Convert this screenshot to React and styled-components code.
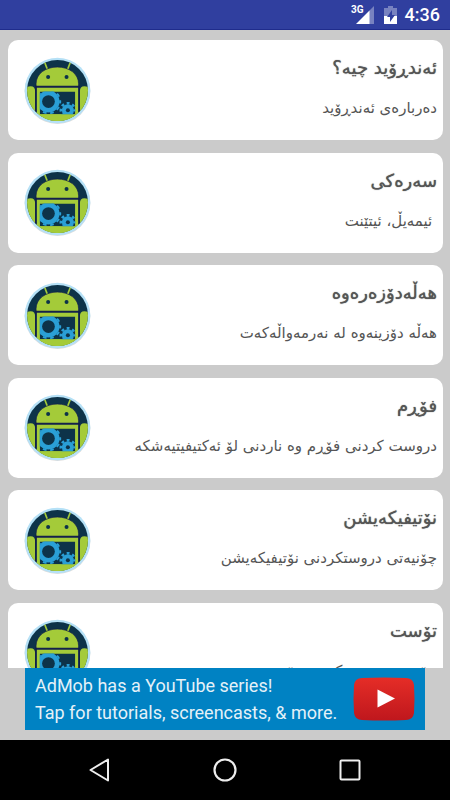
import React from 'react';
import styled, { createGlobalStyle } from 'styled-components';

const GlobalStyle = createGlobalStyle`
  * {
    box-sizing: border-box;
  }

  body {
    margin: 0;
    background-color: #cbcbcb;
    font-family: Roboto, 'DejaVu Sans', sans-serif;
  }
`;

const Screen = styled.div`
  display: flex;
  flex-direction: column;
  height: 100vh;
  background-color: #cbcbcb;
`;

const StatusBar = styled.header`
  display: flex;
  flex: none;
  align-items: center;
  justify-content: flex-end;
  height: 30px;
  padding-right: 10px;
  background-color: #303f9f;
  border-bottom: 1px solid #1f2c8c;
  color: white;
`;

const Network = styled.span`
  align-self: flex-start;
  margin-top: 4px;
  margin-right: -8px;
  font-size: 10px;
  font-weight: 700;
  line-height: 12px;
`;

const Clock = styled.time`
  margin-left: 8px;
  font-size: 18px;
  font-weight: 500;
  line-height: 30px;
`;

const Scroller = styled.main`
  flex: 1;
  min-height: 0;
  overflow: hidden;
  padding: 10px 7px 0 8px;
`;

const LessonList = styled.ul`
  display: flex;
  flex-direction: column;
  justify-content: space-between;
  min-height: 663px;
  margin: 0;
  padding: 0;
  list-style: none;
`;

const Card = styled.li`
  display: flex;
  align-items: center;
  height: 100px;
  padding: 0 6px 0 16px;
  border-radius: 10px;
  background-color: white;
`;

const CardText = styled.div`
  flex: 1;
  min-width: 0;
  padding-bottom: 4px;
  text-align: right;
  font-family: 'DejaVu Sans', sans-serif;
  white-space: nowrap;
`;

const CardTitle = styled.h2`
  margin: 0;
  color: #555;
  font-size: 18px;
  font-weight: 400;
  line-height: 40px;
  text-shadow: 0 0 1px #555;
`;

const CardSubtitle = styled.p`
  margin: 0;
  color: #555;
  font-size: 15px;
  line-height: 40px;
  white-space: pre;
`;

const AdSlot = styled.aside`
  display: flex;
  flex: none;
  justify-content: center;
  padding: 0 25px 10px;
`;

const AdBanner = styled.a`
  display: flex;
  align-items: center;
  justify-content: space-between;
  width: 100%;
  max-width: 400px;
  height: 62px;
  padding: 0 10px;
  background-color: #0082c3;
  color: #e4f1f8;
  font-size: 18px;
  line-height: 27px;
  text-decoration: none;
  white-space: nowrap;
`;

const NavBar = styled.nav`
  display: flex;
  flex: none;
  height: 60px;
  padding: 0 38px;
  background-color: black;
`;

const NavButton = styled.button`
  display: flex;
  flex: 1;
  align-items: center;
  justify-content: center;
  padding: 0;
  border: 0;
  background: none;
  color: #eee;
`;

const lessons = [
  { id: 'android', title: 'ئەندڕۆید چیە؟', subtitle: 'دەربارەی ئەندڕۆید' },
  { id: 'main', title: 'سەرەکی', subtitle: ' ئیمەیڵ، ئیتێنت' },
  { id: 'debug', title: 'هەڵەدۆزەرەوە', subtitle: 'هەڵە دۆزینەوە لە نەرمەواڵەکەت' },
  { id: 'form', title: 'فۆڕم', subtitle: 'دروست کردنی فۆڕم وە ناردنی لۆ ئەکتیفیتیەشکە' },
  { id: 'notification', title: 'نۆتیفیکەیشن', subtitle: 'چۆنیەتی دروستکردنی نۆتیفیکەیشن' },
  { id: 'toast', title: 'تۆست', subtitle: 'چۆنیەتی دروستکردنی تۆست' },
];

// the teeth are a dashed ring around the solid part
function Gear({ cx, cy, r, tooth, teeth, hole }) {
  const ring = r + tooth / 2;
  const dash = (Math.PI * ring) / teeth;
  return (
    <g>
      <circle cx={cx} cy={cy} r={r + 1} fill="#2a9fd6" />
      <circle
        cx={cx}
        cy={cy}
        r={ring}
        fill="none"
        stroke="#2a9fd6"
        strokeWidth={tooth}
        strokeDasharray={`${dash} ${dash}`}
        strokeDashoffset={dash / 2}
      />
      <circle cx={cx} cy={cy} r={hole} fill="#0d3349" />
    </g>
  );
}

function AndroidBadge({ name }) {
  const clip = `badge-${name}`;
  return (
    <svg width="67" height="67" viewBox="0 0 200 200" aria-hidden="true">
      <clipPath id={clip}>
        <circle cx="100" cy="100" r="91" />
      </clipPath>
      <circle cx="100" cy="102" r="98" fill="#dcdcdc" />
      <circle cx="100" cy="100" r="98" fill="#b5e1f7" />
      <g clipPath={`url(#${clip})`}>
        <rect width="200" height="200" fill="#0d3349" />
        <path d="M61 14l10 26M139 14l-10 26" stroke="#a4cb39" strokeWidth="5" />
        <path
          d="M36 87V80C36 50 64 30 99.500 30S163 50 163 80V87z"
          fill="#a4cb39"
          stroke="#10194d"
          strokeWidth="2"
        />
        <circle cx="72" cy="60" r="6" fill="#0d3349" />
        <circle cx="127" cy="60" r="6" fill="#0d3349" />
        <rect y="165" width="200" height="35" fill="#a4cb39" />
        <rect x="38" y="91" width="124" height="109" fill="#a4cb39" />
        <path d="M0 200V97Q8 87 20 87Q33 87 33 101V200z" fill="#a4cb39" />
        <path d="M200 200V97Q192 87 180 87Q167 87 167 101V200z" fill="#a4cb39" />
        <path d="M35.500 86V166M164.500 86V166M34 89H166" stroke="#10194d" strokeWidth="4" />
        <svg x="47" y="103" width="106" height="68" viewBox="47 103 106 68">
          <rect x="47" y="103" width="106" height="68" fill="#0d3349" />
          <Gear cx={73} cy={133} r={32} tooth={6} teeth={10} hole={19} />
          <Gear cx={131} cy={159} r={17} tooth={8} teeth={8} hole={6} />
        </svg>
      </g>
    </svg>
  );
}

function SignalIcon() {
  return (
    <svg width="18" height="18" viewBox="0 0 18 18" aria-hidden="true">
      <path d="M18 0V18H13V5z" fill="white" opacity="0.35" />
      <path d="M0 18L13.500 4.500V18z" fill="white" />
    </svg>
  );
}

const Battery = styled.svg`
  margin-left: 10px;
`;

function BatteryIcon() {
  return (
    <Battery width="13" height="18" viewBox="0 0 13 18" aria-hidden="true">
      <path d="M4 0H9V2H13V10H0V2H4z" fill="white" opacity="0.35" />
      <path d="M0 10H13V18H0z" fill="white" />
      <path d="M8 4L3 11H6V16L11 9H8z" fill="#303f9f" />
    </Battery>
  );
}

function YouTubeIcon() {
  return (
    <svg width="62" height="44" viewBox="0 0 62 44" aria-hidden="true">
      <defs>
        <linearGradient id="yt-red" x1="0" y1="0" x2="0" y2="1">
          <stop offset="0" stopColor="#e52d27" />
          <stop offset="1" stopColor="#bf171d" />
        </linearGradient>
      </defs>
      <path
        d="M9 1Q31 0 53 1Q60 1 61 8Q62 22 61 36Q60 43 53 43Q31 44 9 43Q2 43 1 36Q0 22 1 8Q2 1 9 1z"
        fill="url(#yt-red)"
      />
      <path d="M24.500 12.500L42 21.500L24.500 30.500z" fill="white" />
    </svg>
  );
}

function App() {
  return (
    <>
      <GlobalStyle />
      <Screen>
        <StatusBar>
          <Network>3G</Network>
          <SignalIcon />
          <BatteryIcon />
          <Clock>4:36</Clock>
        </StatusBar>
        <Scroller>
          <LessonList>
            {lessons.map((lesson) => (
              <Card key={lesson.id}>
                <AndroidBadge name={lesson.id} />
                <CardText lang="ckb" dir="rtl">
                  <CardTitle>{lesson.title}</CardTitle>
                  <CardSubtitle>{lesson.subtitle}</CardSubtitle>
                </CardText>
              </Card>
            ))}
          </LessonList>
        </Scroller>
        <AdSlot>
          <AdBanner href="#youtube">
            <span>
              AdMob has a YouTube series!
              <br />
              Tap for tutorials, screencasts, &amp; more.
            </span>
            <YouTubeIcon />
          </AdBanner>
        </AdSlot>
        <NavBar>
          <NavButton aria-label="Back">
            <svg width="24" height="24" viewBox="0 0 24 24">
              <path
                d="M20 1.500V22.500L2.500 12z"
                fill="none"
                stroke="currentColor"
                strokeWidth="2"
                strokeLinejoin="round"
              />
            </svg>
          </NavButton>
          <NavButton aria-label="Home">
            <svg width="24" height="24" viewBox="0 0 24 24">
              <circle cx="12" cy="12" r="10.500" fill="none" stroke="currentColor" strokeWidth="2.200" />
            </svg>
          </NavButton>
          <NavButton aria-label="Recent apps">
            <svg width="24" height="24" viewBox="0 0 24 24">
              <rect
                x="2.500"
                y="2.500"
                width="19"
                height="19"
                rx="1"
                fill="none"
                stroke="currentColor"
                strokeWidth="2"
              />
            </svg>
          </NavButton>
        </NavBar>
      </Screen>
    </>
  );
}

export default App;
